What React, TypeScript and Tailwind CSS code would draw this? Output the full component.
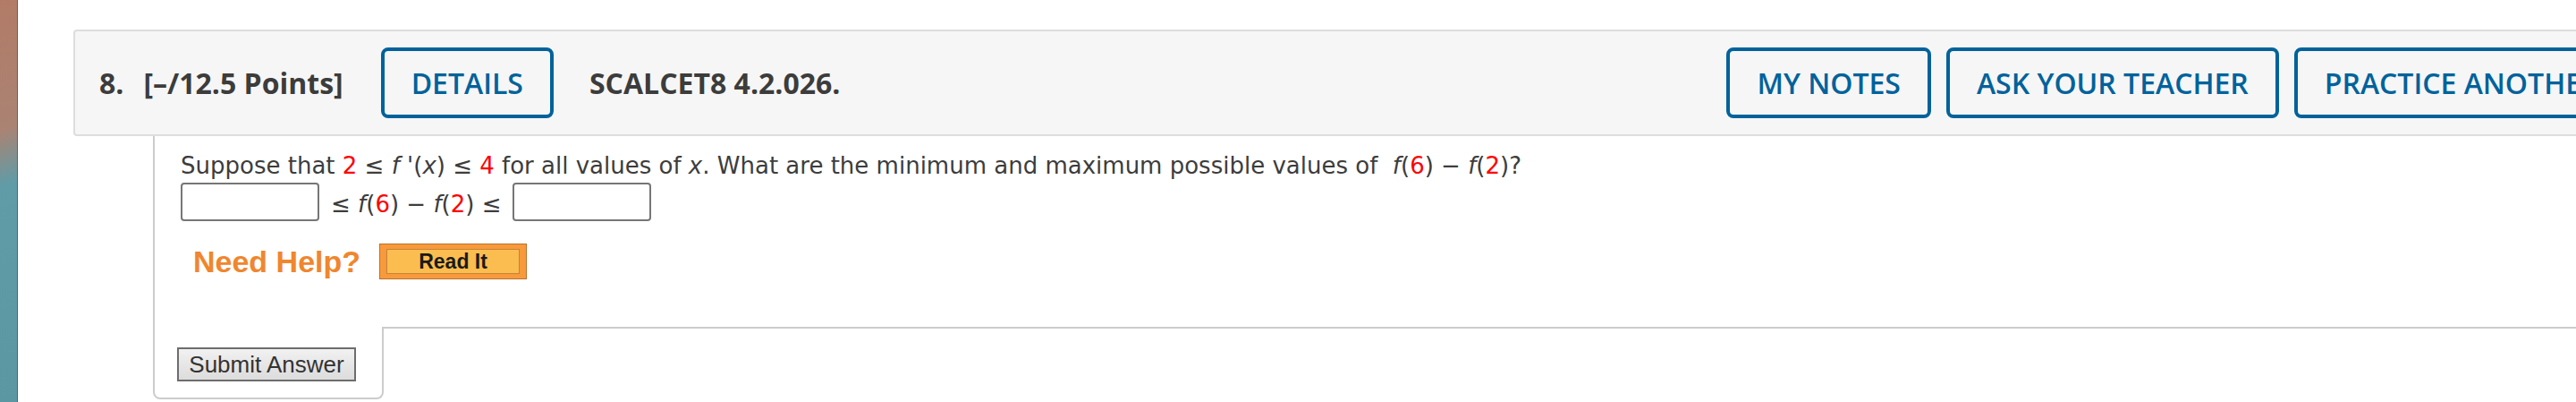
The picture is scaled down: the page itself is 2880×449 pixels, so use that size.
import React from 'react';

const headerButtons = ['MY NOTES', 'ASK YOUR TEACHER', 'PRACTICE ANOTHER'];

const OutlineButton: React.FC<{ label: string }> = ({ label }) => (
  <button className="flex h-[79px] items-center whitespace-nowrap rounded-[8px] border-4 border-[#00629b] px-[30px] text-[32px] font-semibold text-[#00629b]">
    {label}
  </button>
);

const Red: React.FC<{ children: React.ReactNode }> = ({ children }) => (
  <span className="text-[#f00]">{children}</span>
);

export default function App() {
  return (
    <div className="flex h-[449px] w-[2880px] overflow-hidden bg-white">
      {/* desktop edge */}
      <div className="h-full w-[20px] shrink-0 bg-[linear-gradient(162deg,#b27b67_0%,#aa8373_32%,#5f9ca8_46%,#5a97a3_100%)] shadow-[inset_-1px_0_0_rgba(40,60,70,0.5)]" />

      <div className="min-w-0 flex-1 pl-[62px] pt-[33px]">
        {/* question header */}
        <header className="flex h-[119px] w-max items-center rounded-[4px] border-2 border-[#dddddd] bg-[#f6f6f6] pl-[27px] pr-[32px] font-['Open_Sans',sans-serif] text-[#3c3c3c]">
          <span className="text-[32px] font-bold">8.</span>
          <span className="ml-[22px] text-[32px] font-bold">[–/12.5 Points]</span>
          <div className="ml-[42px]">
            <OutlineButton label="DETAILS" />
          </div>
          <span className="ml-[40px] text-[32px] font-bold">SCALCET8 4.2.026.</span>
          <div className="ml-[991px] flex gap-[17px]">
            {headerButtons.map((b) => (
              <OutlineButton key={b} label={b} />
            ))}
          </div>
        </header>

        {/* question body */}
        <div className="ml-[89px] font-['DejaVu_Sans','Verdana',sans-serif] text-[26px] text-[#3d3d3d]">
          <div className="border-l-2 border-[#cccccc] pb-[53px] pl-[29px] pt-[18px]">
            <p className="leading-[30px]">
              Suppose that <Red>2</Red> ≤ <i>f</i> '(<i>x</i>) ≤ <Red>4</Red> for all values of <i>x</i>. What are the
              minimum and maximum possible values of&nbsp; <i>f</i>(<Red>6</Red>) − <i>f</i>(<Red>2</Red>)?
            </p>
            <div className="mt-[4px] flex items-center">
              <input className="h-[43px] w-[155px] rounded-[4px] border-2 border-[#767676] bg-white" />
              <span className="mx-[13px] mt-[4px] leading-[30px]">
                ≤ <i>f</i>(<Red>6</Red>) − <i>f</i>(<Red>2</Red>) ≤
              </span>
              <input className="h-[43px] w-[155px] rounded-[4px] border-2 border-[#767676] bg-white" />
            </div>
            <div className="mt-[25px] flex items-center pl-[14px]">
              <span className="font-['Liberation_Sans',Arial,sans-serif] text-[34px] font-bold leading-[40px] text-[#f0862e]">
                Need Help?
              </span>
              <button className="ml-[21px] h-[40px] w-[165px] border border-[#b8722c] bg-[#f8993b] px-[7px] py-[5px]">
                <span className="flex h-full w-full items-center justify-center border border-[#c4843a] bg-[#fcbd50] font-['Liberation_Sans',Arial,sans-serif] text-[23px] font-bold text-[#1a1a1a]">
                  Read It
                </span>
              </button>
            </div>
          </div>

          {/* submit row */}
          <div className="flex">
            <div className="h-[81px] w-[258px] rounded-b-[8px] border-x-2 border-b-2 border-[#cccccc] pl-[25px] pt-[23px]">
              <button className="h-[38px] w-[200px] border-2 border-[#6d6d6d] bg-[linear-gradient(#f1f1f1,#dcdcdc)] font-['Liberation_Sans',Arial,sans-serif] text-[26px] leading-none text-[#333]">
                Submit Answer
              </button>
            </div>
            <div className="flex-1 border-t-2 border-[#cccccc]" />
          </div>
        </div>
      </div>
    </div>
  );
}
